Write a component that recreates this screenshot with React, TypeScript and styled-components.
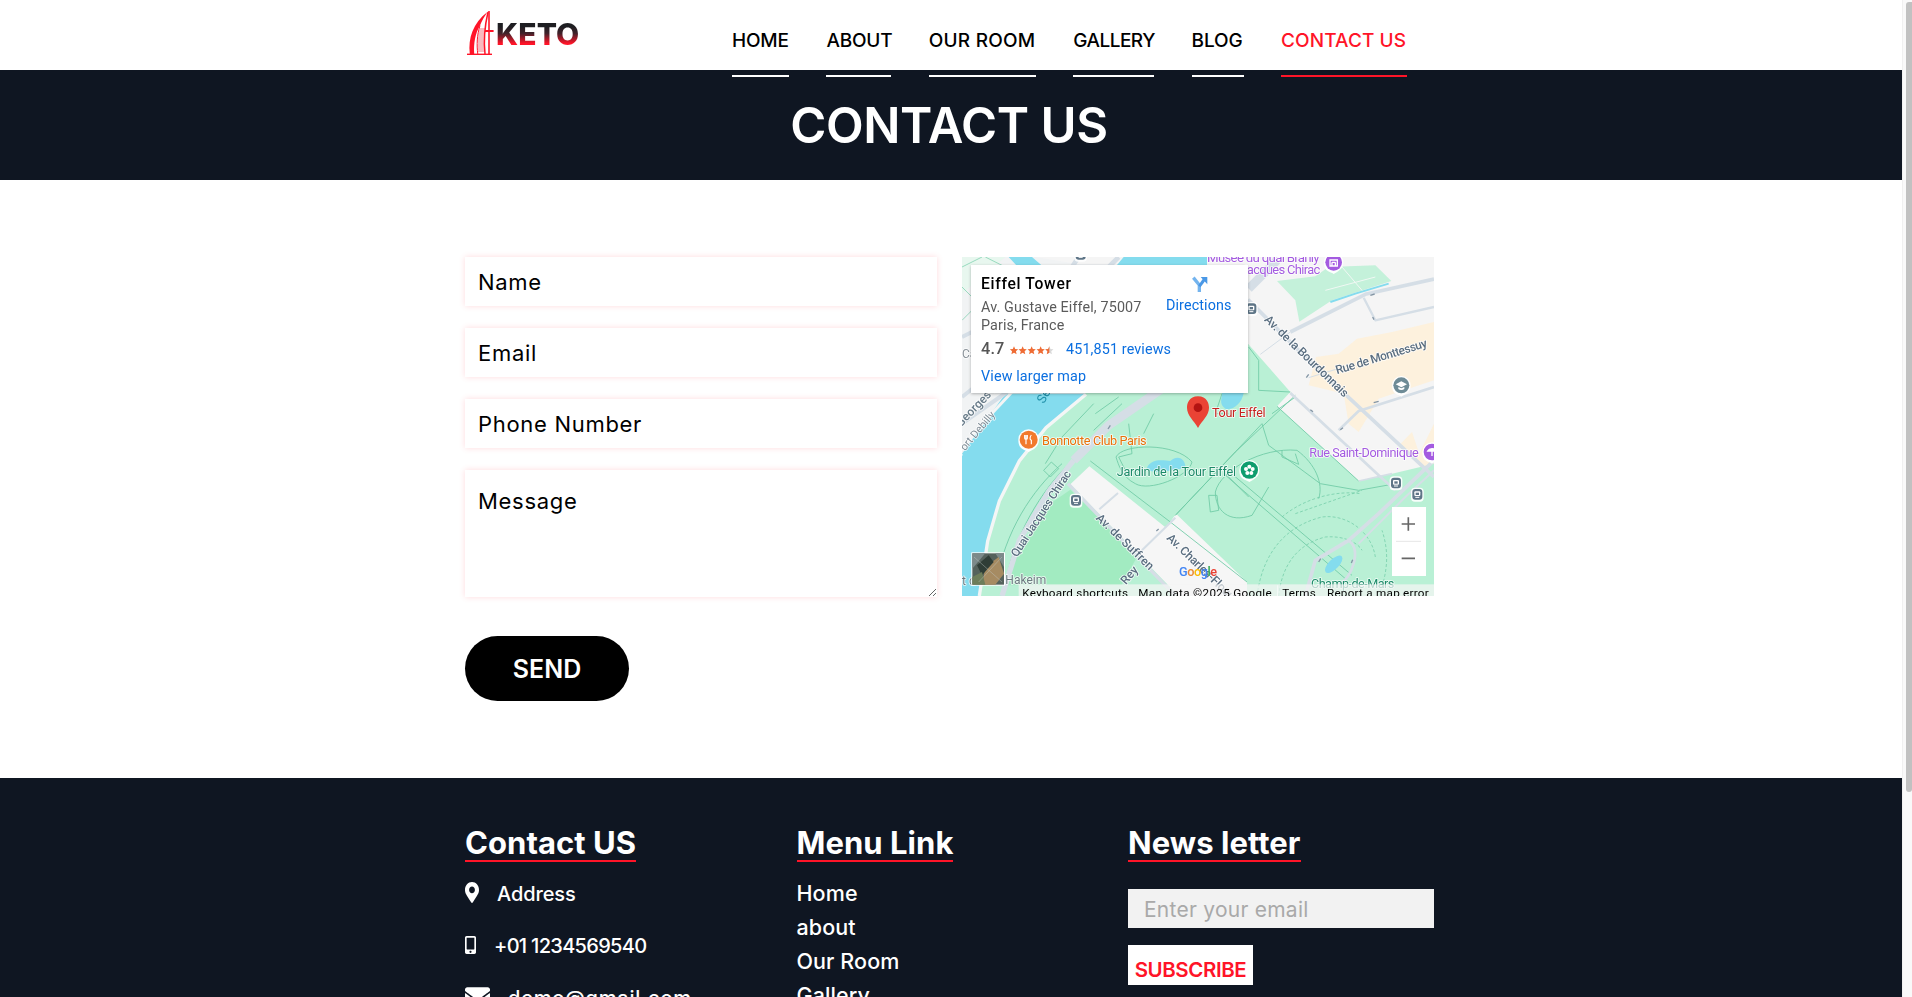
import React from "react";
import styled, { createGlobalStyle } from "styled-components";
import { FaMapMarkerAlt, FaMobileAlt, FaEnvelope } from "react-icons/fa";

const FONT = `Inter, "Noto Sans", "Liberation Sans", sans-serif`;
const DARK = "#0f1622";
const RED = "#ff1428";

const Global = createGlobalStyle`
  html, body { margin: 0; padding: 0; height: 100%; overflow: hidden; background: #fff; }
  * { box-sizing: border-box; }
  body { font-family: ${FONT}; }
`;

const Viewport = styled.div`
  display: flex;
  height: 100vh;
  overflow: hidden;
`;
const Page = styled.div`
  flex: 1 1 auto;
  min-width: 0;
  overflow: hidden;
`;
const ScrollTrack = styled.div`
  flex: 0 0 10px;
  background: #f9f9f9;
  border-left: 1px solid #f0f0f0;
  padding: 2px 0 0 3px;
`;
const ScrollThumb = styled.div`
  height: 790px;
  background: #c1c1c1;
  border-radius: 3px 0 3px 3px;
`;

const Container = styled.div`
  width: 972px;
  margin: 0 auto;
`;

const Header = styled.header`
  position: relative;
  z-index: 2;
  height: 70px;
  background: #fff;
`;
const HeaderRow = styled(Container)`
  display: flex;
  justify-content: space-between;
  padding: 0 30px 0 2px;
`;
const Logo = styled.a`
  display: flex;
  align-items: flex-start;
  gap: 2px;
  padding-top: 11px;
`;
const LogoText = styled.span`
  margin-top: 6px;
  font-size: 30px;
  line-height: 34px;
  font-weight: 800;
  letter-spacing: 0.1px;
  background: linear-gradient(180deg, #1e1e22 28%, #40222a 48%, #ff1428 78%);
  -webkit-background-clip: text;
  background-clip: text;
  color: transparent;
`;
const Nav = styled.nav`
  display: flex;
  gap: 37.4px;
`;
const NavLink = styled.a<{ $w: number; $ls: number; $active?: boolean }>`
  flex: 0 0 ${(p) => p.$w}px;
  min-width: 0;
  height: 77px;
  padding-top: 31px;
  font-size: 19px;
  line-height: 20px;
  font-weight: 500;
  letter-spacing: ${(p) => p.$ls}px;
  white-space: nowrap;
  color: ${(p) => (p.$active ? RED : "#000")};
  border-bottom: 2px solid ${(p) => (p.$active ? RED : "#fff")};
`;

const Banner = styled.section`
  height: 110px;
  padding: 2px 4px 0 0;
  background: ${DARK};
  display: flex;
  align-items: center;
  justify-content: center;
`;
const BannerTitle = styled.h1`
  margin: 0;
  color: #fff;
  font-size: 49px;
  line-height: 60px;
  font-weight: 600;
  letter-spacing: -0.4px;
`;

const Main = styled.main`
  padding: 77px 0;
`;
const ContactGrid = styled(Container)`
  display: grid;
  grid-template-columns: 472px 472px;
  column-gap: 25px;
`;
const Form = styled.form`
  display: flex;
  flex-direction: column;
  gap: 22px;
`;
const fieldCss = `
  display: block;
  width: 100%;
  border: 0;
  outline: 0;
  background: #fff;
  box-shadow: 0 0 6px rgba(255, 70, 85, 0.2);
  font-family: ${FONT};
  font-size: 22px;
  letter-spacing: 0.7px;
  color: #000;
  padding-left: 13px;
  &::placeholder { color: #000; opacity: 1; }
`;
const Field = styled.input`
  ${fieldCss}
  height: 49px;
`;
const MessageField = styled.textarea`
  ${fieldCss}
  height: 127px;
  padding-top: 17px;
  line-height: 28px;
`;
const SendButton = styled.button`
  align-self: flex-start;
  width: 164px;
  height: 65px;
  margin-top: 17px;
  border: 0;
  border-radius: 33px;
  background: #000;
  color: #fff;
  font-family: ${FONT};
  font-size: 25px;
  font-weight: 600;
`;
const MapFrame = styled.div`
  width: 472px;
  height: 339px;
  overflow: hidden;
`;
const MapSvg = styled.svg`
  display: block;
  width: 472px;
  height: 339px;
  filter: blur(0.35px);
  font-family: Roboto, "Liberation Sans", sans-serif;
`;
const Lbl = styled.text<{ $c?: string; $s?: number; $w?: number; $halo?: boolean }>`
  fill: ${(p) => p.$c || "#5a6e80"};
  font-size: ${(p) => p.$s || 36}px;
  font-weight: ${(p) => p.$w || 400};
  ${(p) =>
    p.$halo === false
      ? ""
      : `paint-order: stroke; stroke: rgba(255,255,255,.8); stroke-width: 5px; stroke-linejoin: round;`}
`;

const Footer = styled.footer`
  background: ${DARK};
  height: 219px;
  padding-top: 39px;
  overflow: hidden;
`;
const FooterGrid = styled(Container)`
  display: grid;
  grid-template-columns: repeat(3, 306px);
  column-gap: 25.5px;
`;
const FooterCol = styled.div`
  display: flex;
  flex-direction: column;
  align-items: flex-start;
`;
const FooterHeading = styled.h3`
  margin: 0;
  height: 45px;
  padding-top: 6px;
  font-size: 31px;
  line-height: 40px;
  font-weight: 700;
  letter-spacing: 0.05px;
  color: #fff;
  white-space: nowrap;
  border-bottom: 2px solid ${RED};
`;
const ContactList = styled.ul`
  list-style: none;
  margin: 18px 0 0;
  padding: 0;
  display: flex;
  flex-direction: column;
  gap: 24px;
`;
const ContactItem = styled.li<{ $ls: number }>`
  display: flex;
  align-items: center;
  gap: 18px;
  height: 28px;
  color: #fff;
  font-size: 20px;
  font-weight: 500;
  letter-spacing: ${(p) => p.$ls}px;
  white-space: nowrap;
  svg { flex: none; display: block; margin-top: -3px; }
`;
const PinIcon = styled(FaMapMarkerAlt)`
  width: 14px;
  height: 21px;
`;
const MobileIcon = styled(FaMobileAlt)`
  width: 11px;
  height: 18px;
`;
const MailIcon = styled(FaEnvelope)`
  width: 25px;
  height: 25px;
`;
const MenuList = styled.ul`
  list-style: none;
  margin: 17px 0 0;
  padding: 0;
  display: flex;
  flex-direction: column;
  gap: 6px;
`;
const MenuItem = styled.li`
  height: 28px;
  line-height: 28px;
  color: #fff;
  font-size: 21.5px;
  font-weight: 500;
  letter-spacing: 0.1px;
`;
const NewsInput = styled.input`
  display: block;
  width: 306px;
  height: 39px;
  margin-top: 27px;
  padding: 2px 0 0 16px;
  border: 0;
  outline: 0;
  background: #f2f2f2;
  font-family: ${FONT};
  font-size: 21px;
  letter-spacing: 0.25px;
  &::placeholder { color: #a9a9a9; opacity: 1; }
`;
const SubscribeButton = styled.button`
  display: block;
  width: 125px;
  height: 40px;
  margin-top: 17px;
  padding: 8px 0 0;
  border: 0;
  background: #fff;
  color: ${RED};
  font-family: ${FONT};
  font-size: 20.5px;
  font-weight: 600;
  text-align: center;
  letter-spacing: -0.4px;
`;

const TowerLogo = () => (
  <svg width="27" height="44" viewBox="0 0 27 44">
    <path d="M0 42.6h25V44H0z" fill={RED} />
    <path d="M2.8 43C1 27 6 12 20.4 1 17.4 5.5 14.6 10 13 14.5 8.4 22 6.4 32 7.2 43z" fill={RED} />
    <path d="M13 14.5C10 24 9.6 34 10.8 43" fill="none" stroke={RED} strokeWidth="1" />
    <path d="M11 40h6.6M11 38h6.6M11 36h6.4M11 34h6.4M11 32h6.2M11 30h6.2M11 28h6.2M11.2 26h6M11.4 24h6M11.8 22h5.8M12.2 20h5.6M12.8 18h5.2" stroke="#f0525f" strokeWidth=".8" />
    <path d="M21 1C18.2 13 16.6 30 18 43" fill="none" stroke={RED} strokeWidth="1.5" />
    <path d="M22 0v43" stroke={RED} strokeWidth="1.6" />
    <path d="M18 20h8.6" stroke={RED} strokeWidth="2" />
  </svg>
);

const Metro = ({ x, y }: { x: number; y: number }) => (
  <g transform={`translate(${x} ${y})`}>
    <rect x="-19" y="-20" width="38" height="42" rx="12" fill="#fff" opacity=".9" />
    <rect x="-15" y="-16" width="30" height="32" rx="9" fill="#5e7587" />
    <rect x="-9" y="-9" width="18" height="14" rx="3" fill="#fff" />
    <rect x="-5" y="-5" width="10" height="7" fill="#5e7587" />
    <path d="M-6 9h12" stroke="#fff" strokeWidth="3" />
  </g>
);

const Poi = ({ x, y, r, c, children }: { x: number; y: number; r: number; c: string; children?: React.ReactNode }) => (
  <g transform={`translate(${x} ${y})`}>
    <path d={`M${-r - 4} 0a${r + 4} ${r + 4} 0 1 1 ${2 * r + 8} 0c0 ${r * 0.8} ${-r * 0.6} ${r + 2} ${-r - 4} ${r + 10}c${-r * 0.4} -8 ${-r - 4} ${-r * 0.2} ${-r - 4} ${-r - 10}z`} fill="#fff" opacity=".95" />
    <circle r={r} fill={c} />
    {children}
  </g>
);

const Star = ({ x, c, half }: { x: number; c: string; half?: boolean }) => (
  <g transform={`translate(${x} 280)`}>
    <path d="M0-12 3.6-3.8 12.4-3 5.8 2.8 7.8 11.5 0 6.9-7.8 11.5-5.8 2.8-12.4-3-3.6-3.8z" fill={half ? "#d9d9d9" : c} />
    {half && <path d="M0-12V6.9L-7.8 11.5-5.8 2.8-12.4-3-3.6-3.8z" fill={c} />}
  </g>
);

const G = "#6fcba6";
const MapPicture = () => (
  <MapSvg viewBox="0 0 1416 1017">
    <defs>
      <filter id="pop" x="-5%" y="-5%" width="110%" height="115%">
        <feDropShadow dx="0" dy="3" stdDeviation="5" floodColor="#000" floodOpacity=".28" />
      </filter>
    </defs>
    <rect width="1416" height="1017" fill="#f5f5f5" />

    {/* beige quarter */}
    <path d="M1040 385 1062 300 1130 290 1185 245 1290 225 1416 195V370L1250 425 1190 525 1160 500 1145 410zM1316 560 1350 525 1372 590 1416 500V640L1380 630z" fill="#fdf1dd" />

    {/* left bank + river */}
    <path d="M0 0H130L220 0 400 30 858 30V100L370 410H130L0 590z" fill="#f1f3f4" />
    <path d="M140 0H210L360 130 420 410H130L0 590V1017H50L75 850 110 730 170 610 250 510 370 410 400 280z" fill="#84dcee" />
    <path d="M485 0H735V30H460z" fill="#84dcee" />
    <path d="M0 0 130 0 0 110z" fill="#e8f7ef" />
    <path d="M0 30 60 0M0 90 40 130M0 190 30 160M70 0 130 30" stroke={G} strokeWidth="2" fill="none" />
    <path d="M0 240 30 225M0 420 150 300M0 500 135 405" stroke="#d5dee6" strokeWidth="12" fill="none" />
    <path d="M150 405 0 565" stroke="#f5f5f5" strokeWidth="9" fill="none" />

    {/* park */}
    <path d="M340 300 858 260 985 405 945 448 1190 672 1290 650 1416 620V1017H50L75 850 110 730 170 610 250 510 370 410z" fill="#b9f0d5" />
    <path d="M372 412 252 512 172 612 112 732 77 852 52 1017" fill="none" stroke="#f4f6f6" strokeWidth="10" />

    {/* top garden */}
    <path d="M945 72 1060 58 1100 30 1240 25 1288 72 1110 130 1012 194 1000 130z" fill="#c4f1da" />
    <path d="M1105 135 1180 110 1280 80" stroke="#84dcee" strokeWidth="6" fill="none" />
    <path d="M1090 100 1240 60M1140 30 1200 100" stroke="#f1f8f4" strokeWidth="3" fill="none" />

    {/* blocks south of the quai */}
    <path d="M325 682 382 628 612 812 642 770 855 975V1017H650z" fill="#f6f6f6" />
    <path d="M325 698 528 895 478 985H130L165 890 250 750z" fill="#a2ebc1" />

    {/* park paths */}
    <g fill="none" stroke={G} strokeWidth="2.6">
      <path d="M1000 415 820 585 640 775M900 500 640 775" />
      <path d="M385 612 625 795M785 650 1150 965M803 645 1170 955" />
      <path d="M900 500 920 565 1075 680M1075 680 1190 700M930 470 1000 420" />
      <path d="M462 600C480 560 640 555 690 615 680 660 560 705 520 680 480 660 470 625 462 600z" />
      <path d="M760 705C775 640 900 570 1005 580 1060 620 1085 680 1070 725M760 705C760 760 800 800 870 775L920 690" />
      <path d="M960 580V600L1010 622 1000 590M790 650 860 720" />
      <path d="M740 715H765L770 760 745 765z" />
      <path d="M500 500 510 590 470 600 500 660M545 530 575 470M395 440 300 540 250 620" />
      <path d="M130 980C155 840 235 700 330 612M100 985C130 820 210 700 300 620" />
      <path d="M245 640 268 615 290 635 265 660z" />
      <path d="M395 520 480 440M400 470 470 420M860 270 890 310 890 400 985 405" />
      <path d="M780 410 760 470 800 470M625 795 855 975M945 448 1190 672M1190 700 1290 682" />
    </g>
    <g fill="none" stroke={G} strokeWidth="2.2" strokeDasharray="9 6">
      <path d="M885 1017C900 900 960 810 1080 780 1160 770 1230 830 1240 900" />
      <path d="M950 1017C960 920 1010 860 1090 840 1150 835 1190 860 1200 880" />
      <path d="M960 780C1030 720 1130 700 1195 710M1250 1017C1280 940 1280 880 1260 820M1000 770 1200 700" />
    </g>

    {/* water in park */}
    <path d="M555 632C570 600 610 612 625 612 650 590 672 610 670 632 620 644 560 652 555 632z" fill="#84dcee" />
    <path d="M780 408H845C840 440 810 462 790 455 770 440 780 425 780 408z" fill="#84dcee" />
    <ellipse cx="1115" cy="922" rx="34" ry="15" transform="rotate(-45 1115 922)" fill="#84dcee" />

    {/* roads */}
    <g fill="none" stroke="#d5dee6" strokeLinejoin="round">
      <path d="M600 395 440 505 335 610" strokeWidth="26" />
      <path d="M335 610 262 700 172 850 120 1017" strokeWidth="16" />
      <path d="M318 680 640 1017" strokeWidth="10" />
      <path d="M412 757 468 708M540 880 640 782" strokeWidth="6" />
      <path d="M858 128 1010 280 1150 412 1416 660" strokeWidth="11" />
      <path d="M985 408 1250 655 1300 700" strokeWidth="8" />
      <path d="M1416 66 1210 112 985 225" strokeWidth="11" />
      <path d="M985 225 895 292" strokeWidth="3" />
      <path d="M1205 122 1240 190 1416 150" strokeWidth="7" />
      <path d="M1416 390 1190 462 1130 520" strokeWidth="8" />
      <path d="M1040 362 1125 336" strokeWidth="3" />
      <path d="M860 95 945 10" strokeWidth="26" />
      <path d="M470 0 440 30H330L350 0" strokeWidth="14" />
      <path d="M1416 610 1250 770 1160 850 1060 910 1030 1017" strokeWidth="11" />
      <path d="M1160 850C1200 880 1170 960 1130 985" strokeWidth="8" />
      <path d="M1416 640 1330 720 1190 860" strokeWidth="6" />
      <path d="M1190 672 1290 650" strokeWidth="5" />
    </g>
    <path d="M445 505 438 516M1033 362 1040 352M1045 458 1053 464M1135 518 1143 512M1235 437 1250 433M1225 115 1238 111M1232 180 1236 188M1070 915 1076 905M1168 918 1172 908M583 822 590 816" stroke="#8496a5" strokeWidth="4" />

    {/* POI */}
    <Metro x={868} y={155} />
    <Metro x={342} y={730} />
    <Metro x={1302} y={678} />
    <Metro x={1366} y={712} />
    <Metro x={356} y={-8} />
    <Poi x={200} y={548} r={27} c="#f27a2c">
      <path d="M-8-14V-2M-12-14V-4C-12 0-4 0-4-4V-14M-8-2V14M8-14C3-8 3 0 8 2V14" stroke="#fff" strokeWidth="3.5" fill="none" />
    </Poi>
    <Poi x={862} y={639} r={26} c="#0f9d6e">
      <g fill="#fff">
        <circle cy="-10" r="6" /><circle cx="10" cy="-3" r="6" /><circle cx="6" cy="9" r="6" /><circle cx="-6" cy="9" r="6" /><circle cx="-10" cy="-3" r="6" />
      </g>
      <circle r="3" fill="#0f9d6e" />
    </Poi>
    <Poi x={1115} y={16} r={25} c="#a45be0">
      <path d="M-11-7H11V11H-11zM-5 0V11M5 0V11M-5 0H5" stroke="#fff" strokeWidth="4" fill="none" />
    </Poi>
    <Poi x={1410} y={585} r={25} c="#a45be0">
      <path d="M-13-3C-8-12 8-12 13-3zM0-3V12" stroke="#fff" strokeWidth="4" fill="#fff" />
    </Poi>
    <Poi x={1318} y={385} r={24} c="#6e8b96">
      <path d="M0-12-17-3 0 6 17-3zM-9 5V11C-4 15 4 15 9 11V5L0 9z" fill="#fff" />
    </Poi>

    {/* map labels */}
    <Lbl x={735} y={15} $c="#a45be0" $s={40} textLength={338}>Musée du quai Branly</Lbl>
    <Lbl x={835} y={50} $c="#a45be0" $s={39} textLength={240}>Jacques Chirac</Lbl>
    <Lbl x={905} y={190} $s={36} $w={500} textLength={335} transform="rotate(44 905 190)">Av. de la Bourdonnais</Lbl>
    <Lbl x={1125} y={352} $s={36} $w={500} textLength={285} transform="rotate(-17 1125 352)">Rue de Monttessuy</Lbl>
    <Lbl x={400} y={785} $s={36} $w={500} textLength={225} transform="rotate(44 400 785)">Av. de Suffren</Lbl>
    <Lbl x={612} y={845} $s={36} $w={500} textLength={300} transform="rotate(44 612 845)">Av. Charles-Floquet</Lbl>
    <Lbl x={492} y={985} $s={36} $w={500} transform="rotate(-50 492 985)">Rey</Lbl>
    <Lbl x={165} y={902} $s={35} $w={500} textLength={300} transform="rotate(-57 165 902)">Quai Jacques Chirac</Lbl>
    <Lbl x={-4} y={512} $s={36} $c="#677a88" $w={500} transform="rotate(-46 -4 512)">Georges P</Lbl>
    <Lbl x={-4} y={598} $s={32} $c="#7f8c96" transform="rotate(-50 -4 598)">Port Debilly</Lbl>
    <Lbl x={245} y={442} $s={38} $c="#1f8fa8" $halo={false} transform="rotate(-60 245 442)">Se</Lbl>
    <Lbl x={0} y={302} $s={36} $c="#8a9299">Ca</Lbl>
    <Lbl x={130} y={982} $s={36} $c="#6c7a80">Hakeim</Lbl>
    <Lbl x={0} y={985} $s={36} $c="#6c7a80">t d</Lbl>
    <Lbl x={240} y={565} $s={38} $c="#e8710a" textLength={314}>Bonnotte Club Paris</Lbl>
    <Lbl x={464} y={656} $s={38} $c="#1b8a68" textLength={358}>Jardin de la Tour Eiffel</Lbl>
    <Lbl x={1042} y={600} $s={38} $c="#a45be0" textLength={328}>Rue Saint-Dominique</Lbl>
    <Lbl x={1047} y={992} $s={38} $c="#1b8a68" textLength={250}>Champ-de-Mars</Lbl>
    <Lbl x={750} y={479} $s={38} $c="#c5221f" textLength={161}>Tour Eiffel</Lbl>

    {/* marker */}
    <path d="M708 418C735 418 741 440 741 452 741 476 720 490 708 513 696 490 675 476 675 452 675 440 681 418 708 418z" fill="#ea4335" />
    <circle cx="708" cy="452" r="13" fill="#b31412" />

    {/* Google */}
    <Lbl x={651} y={958} $s={38} $w={500} $halo={false} textLength={114}>
      <tspan fill="#4285f4">G</tspan><tspan fill="#ea8a35">o</tspan><tspan fill="#fbbc04">o</tspan><tspan fill="#4285f4">g</tspan><tspan fill="#34a853">l</tspan><tspan fill="#ea4335">e</tspan>
    </Lbl>

    {/* satellite thumbnail */}
    <rect x="28" y="886" width="101" height="100" fill="#fff" />
    <rect x="31" y="889" width="95" height="94" fill="#55625c" />
    <path d="M31 889H70L31 935zM100 889H126V930z" fill="#7c8a8a" />
    <path d="M70 930 110 900 126 950 100 983H60z" fill="#a68b62" />
    <path d="M45 925 80 895 95 915 60 955z" fill="#2f3d36" />
    <path d="M31 960 60 945 70 983H31z" fill="#6d7d5a" />
    <path d="M36 900 120 975M120 900 50 975" stroke="#c4cbc9" strokeWidth="2" opacity=".6" />

    {/* attribution */}
    <rect x="170" y="982" width="1246" height="35" fill="#f5f5f5" opacity=".72" />
    <path d="M947 985V1017" stroke="#fff" strokeWidth="2" />
    <Lbl x={181} y={1021} $s={35} $c="#000" $halo={false} textLength={317}>Keyboard shortcuts</Lbl>
    <Lbl x={529} y={1021} $s={35} $c="#000" $halo={false} textLength={400}>Map data ©2025 Google</Lbl>
    <Lbl x={961} y={1021} $s={35} $c="#000" $halo={false} textLength={100}>Terms</Lbl>
    <Lbl x={1095} y={1021} $s={35} $c="#000" $halo={false} textLength={305}>Report a map error</Lbl>

    {/* zoom control */}
    <rect x="1290" y="750" width="102" height="207" fill="#fff" />
    <path d="M1319 801H1359M1339 781V821M1319 904H1359" stroke="#666" strokeWidth="5" />
    <path d="M1302 853H1377" stroke="#e6e6e6" strokeWidth="3" />

    {/* place card */}
    <rect x="27" y="24" width="831" height="384" fill="#fff" filter="url(#pop)" />
    <Lbl x={57} y={95} $s={47} $w={500} $c="#000" $halo={false} textLength={270}>Eiffel Tower</Lbl>
    <Lbl x={57} y={165} $s={43} $c="#5b5b5b" $halo={false} textLength={481}>Av. Gustave Eiffel, 75007</Lbl>
    <Lbl x={57} y={219} $s={43} $c="#5b5b5b" $halo={false} textLength={250}>Paris, France</Lbl>
    <Lbl x={57} y={290} $s={49} $w={500} $c="#555" $halo={false} textLength={70}>4.7</Lbl>
    <Star x={156} c="#ef6c35" />
    <Star x={182} c="#ef6c35" />
    <Star x={209} c="#ef6c35" />
    <Star x={236} c="#ef6c35" />
    <Star x={262} c="#ef6c35" half />
    <Lbl x={312} y={290} $s={43} $c="#0b6fe0" $halo={false} textLength={315}>451,851 reviews</Lbl>
    <Lbl x={57} y={372} $s={43} $c="#0b6fe0" $halo={false} textLength={315}>View larger map</Lbl>
    <Lbl x={612} y={159} $s={43} $c="#0b6fe0" $halo={false} textLength={196}>Directions</Lbl>
    <path d="M712 105V84L694 62" fill="none" stroke="#74b4ee" strokeWidth="10" />
    <path d="M712 88 728 66" fill="none" stroke="#4a98e6" strokeWidth="9" />
    <path d="M716 60H736V82z" fill="#4a98e6" />
  </MapSvg>
);

const navItems: { t: string; w: number; ls: number; active?: boolean }[] = [
  { t: "HOME", w: 57, ls: -0.2 },
  { t: "ABOUT", w: 65, ls: -0.2 },
  { t: "OUR ROOM", w: 107, ls: 0.2 },
  { t: "GALLERY", w: 81, ls: -0.5 },
  { t: "BLOG", w: 52, ls: -0.1 },
  { t: "CONTACT US", w: 126, ls: 0.1, active: true },
];

export default function App() {
  return (
    <>
      <Global />
      <Viewport>
        <Page>
          <Header>
            <HeaderRow>
              <Logo>
                <TowerLogo />
                <LogoText>KETO</LogoText>
              </Logo>
              <Nav>
                {navItems.map((n) => (
                  <NavLink key={n.t} $w={n.w} $ls={n.ls} $active={n.active}>{n.t}</NavLink>
                ))}
              </Nav>
            </HeaderRow>
          </Header>
          <Banner>
            <BannerTitle>CONTACT US</BannerTitle>
          </Banner>
          <Main>
            <ContactGrid>
              <Form>
                <Field placeholder="Name" />
                <Field placeholder="Email" />
                <Field placeholder="Phone Number" />
                <MessageField placeholder="Message" />
                <SendButton type="button">SEND</SendButton>
              </Form>
              <MapFrame>
                <MapPicture />
              </MapFrame>
            </ContactGrid>
          </Main>
          <Footer>
            <FooterGrid>
              <FooterCol>
                <FooterHeading>Contact US</FooterHeading>
                <ContactList>
                  <ContactItem $ls={-0.1}><PinIcon preserveAspectRatio="none" />Address</ContactItem>
                  <ContactItem $ls={-0.7}><MobileIcon preserveAspectRatio="none" />+01 1234569540</ContactItem>
                  <ContactItem $ls={0.8}><MailIcon />demo@gmail.com</ContactItem>
                </ContactList>
              </FooterCol>
              <FooterCol>
                <FooterHeading>Menu Link</FooterHeading>
                <MenuList>
                  <MenuItem>Home</MenuItem>
                  <MenuItem>about</MenuItem>
                  <MenuItem>Our Room</MenuItem>
                  <MenuItem>Gallery</MenuItem>
                </MenuList>
              </FooterCol>
              <FooterCol>
                <FooterHeading>News letter</FooterHeading>
                <NewsInput placeholder="Enter your email" />
                <SubscribeButton type="button">SUBSCRIBE</SubscribeButton>
              </FooterCol>
            </FooterGrid>
          </Footer>
        </Page>
        <ScrollTrack>
          <ScrollThumb />
        </ScrollTrack>
      </Viewport>
    </>
  );
}
